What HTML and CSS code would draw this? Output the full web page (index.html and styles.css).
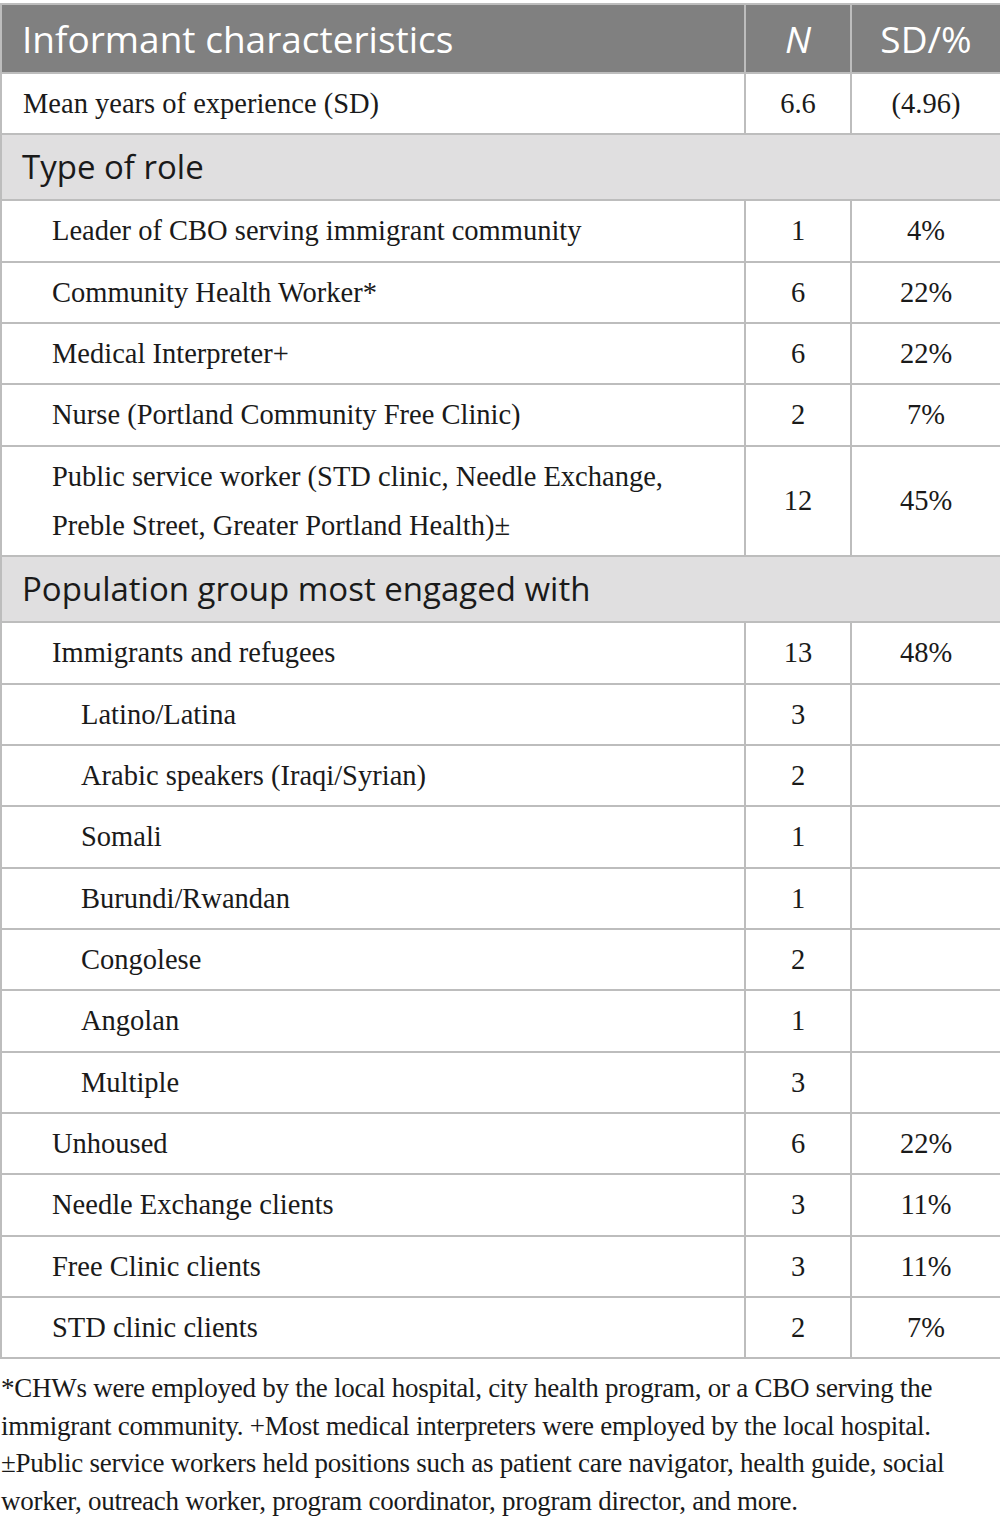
FILE: index.html
```html
<!DOCTYPE html>
<html>
<head>
<meta charset="utf-8">
<link rel="stylesheet" href="styles.css">
</head>
<body>
<table class="tbl">
  <colgroup><col class="c1"><col class="c2"><col class="c3"></colgroup>
  <thead>
    <tr class="head"><th class="lbl">Informant characteristics</th><th><i>N</i></th><th>SD/%</th></tr>
  </thead>
  <tbody>
    <tr><td class="l0">Mean years of experience (SD)</td><td>6.6</td><td>(4.96)</td></tr>
    <tr class="sec"><td colspan="3">Type of role</td></tr>
    <tr><td class="l1">Leader of CBO serving immigrant community</td><td>1</td><td>4%</td></tr>
    <tr><td class="l1">Community Health Worker*</td><td>6</td><td>22%</td></tr>
    <tr><td class="l1">Medical Interpreter+</td><td>6</td><td>22%</td></tr>
    <tr><td class="l1">Nurse (Portland Community Free Clinic)</td><td>2</td><td>7%</td></tr>
    <tr><td class="l1">Public service worker (STD clinic, Needle Exchange,<br>Preble Street, Greater Portland Health)±</td><td>12</td><td>45%</td></tr>
    <tr class="sec"><td colspan="3">Population group most engaged with</td></tr>
    <tr><td class="l1">Immigrants and refugees</td><td>13</td><td>48%</td></tr>
    <tr><td class="l2">Latino/Latina</td><td>3</td><td></td></tr>
    <tr><td class="l2">Arabic speakers (Iraqi/Syrian)</td><td>2</td><td></td></tr>
    <tr><td class="l2">Somali</td><td>1</td><td></td></tr>
    <tr><td class="l2">Burundi/Rwandan</td><td>1</td><td></td></tr>
    <tr><td class="l2">Congolese</td><td>2</td><td></td></tr>
    <tr><td class="l2">Angolan</td><td>1</td><td></td></tr>
    <tr><td class="l2">Multiple</td><td>3</td><td></td></tr>
    <tr><td class="l1">Unhoused</td><td>6</td><td>22%</td></tr>
    <tr><td class="l1">Needle Exchange clients</td><td>3</td><td>11%</td></tr>
    <tr><td class="l1">Free Clinic clients</td><td>3</td><td>11%</td></tr>
    <tr><td class="l1">STD clinic clients</td><td>2</td><td>7%</td></tr>
  </tbody>
</table>
<p class="note">*CHWs were employed by the local hospital, city health program, or a CBO serving the<br>immigrant community. +Most medical interpreters were employed by the local hospital.<br>±Public service workers held positions such as patient care navigator, health guide, social<br>worker, outreach worker, program coordinator, program director, and more.</p>
</body>
</html>
```
FILE: styles.css
```css
html, body { margin: 0; padding: 0; background: #fff; }
body { padding-top: 3px; font-family: "Liberation Serif", "DejaVu Serif", serif; color: #1a1a1a; }
.tbl { width: 1000px; border-collapse: collapse; table-layout: fixed; }
.c1 { width: 744px; }
.c2 { width: 106px; }
.c3 { width: 150px; }
.tbl td, .tbl th { border: 2px solid #bdbdbd; padding: 5px 0; line-height: 49.33px; font-size: 28.5px; text-align: center; font-weight: normal; }
.head th { background: #808080; color: #fff; font-family: "Open Sans", sans-serif; font-size: 37px; line-height: 57px; padding: 5px 0; }
.head th.lbl { text-align: left; padding-left: 20px; }
.tbl td.l0 { text-align: left; padding-left: 21px; }
.tbl td.l1 { text-align: left; padding-left: 50px; }
.tbl td.l2 { text-align: left; padding-left: 79px; }
.sec td { background: #e0dfe0; text-align: left; padding-left: 20px; font-family: "Open Sans", sans-serif; font-size: 33px; line-height: 54px; padding-top: 5px; padding-bottom: 5px; }
.note { margin: 11px 0 0 1px; font-size: 27px; letter-spacing: -0.25px; line-height: 37.5px; white-space: nowrap; }
```
